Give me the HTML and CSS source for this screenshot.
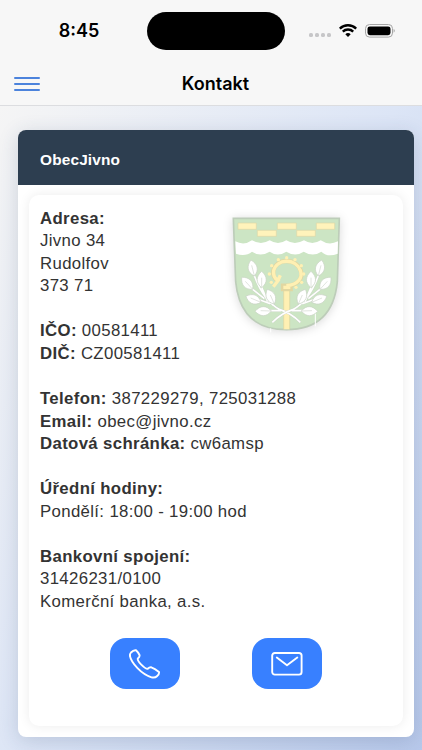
FILE: index.html
```html
<!DOCTYPE html>
<html lang="cs">
<head>
    <meta charset="utf-8">
    <meta name="viewport" content="width=device-width, initial-scale=1">
    <title>Kontakt</title>
    <link rel="stylesheet" href="styles.css">
</head>
<body>
    <header>
        <div class="status">
            <span class="time">8:45</span>
            <span class="island"></span>
            <div class="status-icons">
                <svg class="dots" width="22" height="4" viewBox="0 0 22 4" fill="#c6c6c8">
                    <rect width="4" height="4" rx="1.6"/><rect x="6" width="4" height="4" rx="1.6"/><rect x="12" width="4" height="4" rx="1.6"/><rect x="18" width="4" height="4" rx="1.6"/>
                </svg>
                <svg class="wifi" width="18" height="13" viewBox="0 0 18 13" fill="none" stroke="#000" stroke-width="2.4">
                    <path d="M.8 4.6a11.7 11.7 0 0 1 16.4 0M3.8 7.7a7.4 7.4 0 0 1 10.4 0"/>
                    <path d="M6.3 10.2a4 4 0 0 1 5.4 0L9 12.9z" fill="#000" stroke="none"/>
                </svg>
                <svg width="30" height="14" viewBox="0 0 30 14">
                    <rect x=".5" y=".5" width="27" height="12.6" rx="4" fill="none" stroke="#a6a6a6"/>
                    <rect x="2.5" y="2.4" width="23" height="8.8" rx="2.4"/>
                    <path d="M28.7 4.8q2 2 0 4z" fill="#999"/>
                </svg>
            </div>
        </div>
        <nav>
            <button class="menu" type="button" aria-label="Menu"><span></span><span></span><span></span></button>
            <h1>Kontakt</h1>
        </nav>
    </header>
    <main>
        <div class="card">
            <h2>ObecJivno</h2>
            <div class="content">
                <svg class="crest" width="135" height="135" viewBox="0 0 405 405">
                    <path d="M40 40H358L352 230Q338 374 199 374Q61 374 47 230Z" fill="#cce5c4" stroke="#bdcdb9" stroke-width="5"/>
                    <path d="M46 109q26 14 50-3q27 16 53 0q25 16 50 0q25 16 53 0q25 16 50 0q25 17 52 3l-1 37q-30 12-49-6q-25 17-53 0q-25 17-52 0q-26 17-50 0q-28 17-53 0q-20 16-48 6z" fill="#fff"/>
                    <path d="M54 54h55v19H54zM112 76h57v18h-57zM172 54h57v19h-57zM230 76h56v18h-56zM289 54h55v19h-55z" fill="#fff3bb" stroke="#dcd8a8" stroke-width="2"/>
                    <path d="M191 373V252h18V373" fill="#fff0b3" stroke="#ded69f" stroke-width="2"/>
                    <path d="M189 242h23v10h-23zM199 243C236 241 250 218 242 196C226 157 169 160 160 197Q157 216 173 228" fill="none" stroke="#e1d7a1" stroke-width="13"/>
                    <path d="M190 247h21M199 242C234 240 249 218 241 196C226 158 170 161 161 197Q158 215 174 227l-14 18M173 228l8-17" fill="none" stroke="#fff0b3" stroke-width="10"/>
                    <g fill="#fff0b3">
                        <circle cx="200" cy="158" r="5"/><circle cx="175" cy="164" r="5"/><circle cx="225" cy="164" r="5"/><circle cx="155" cy="182" r="5"/><circle cx="244" cy="182" r="5"/><circle cx="148" cy="207" r="5"/><circle cx="251" cy="207" r="5"/><circle cx="154" cy="232" r="5"/><circle cx="245" cy="232" r="5"/><circle cx="228" cy="247" r="5"/>
                    </g>
                    <defs>
                        <path id="leaf" d="M0 0C-19-15-17-34 0-49C17-34 19-15 0 0Z"/>
                        <g id="branch">
                            <path d="M241 352Q211 323 180 314Q131 288 103 212M143 290L125 247M160 302L153 282M133 281L88 245M151 296L110 281M183 317L145 317" fill="none" stroke="#c8d0c5" stroke-width="7"/>
                            <path d="M241 352Q211 323 180 314Q131 288 103 212M143 290L125 247M160 302L153 282M133 281L88 245M151 296L110 281M183 317L145 317" fill="none" stroke="#fff" stroke-width="5"/>
                            <g fill="#fff" stroke="#c8d3c4" stroke-width="2">
                                <use href="#leaf" transform="translate(103 213) rotate(-12)"/>
                                <use href="#leaf" transform="translate(125 248)"/>
                                <use href="#leaf" transform="translate(98 253) rotate(-42)"/>
                                <use href="#leaf" transform="translate(163 297) rotate(-26)"/>
                                <use href="#leaf" transform="translate(123 292) rotate(-68)"/>
                                <use href="#leaf" transform="translate(154 318) rotate(-91)"/>
                            </g>
                            <path d="M103 212L95 181M125 247V218M98 253L76 229M163 297L151 270M123 292L92 279M154 318L122 317" fill="none" stroke="#d0d6cd" stroke-width="2"/>
                        </g>
                    </defs>
                    <use href="#branch"/>
                    <use href="#branch" transform="translate(398 0) scale(-1 1)"/>
                    <path d="M286 326v38M152 370v12" stroke="#fff" stroke-width="3"/>
                </svg>
                <p>
                    <b>Adresa:</b><br>
                    Jivno 34<br>
                    Rudolfov<br>
                    373 71<br>
                    <br>
                    <b>IČO:</b> 00581411<br>
                    <b>DIČ:</b> CZ00581411<br>
                    <br>
                    <b>Telefon:</b> 387229279, 725031288<br>
                    <b>Email:</b> obec@jivno.cz<br>
                    <b>Datová schránka:</b> cw6amsp<br>
                    <br>
                    <b>Úřední hodiny:</b><br>
                    Pondělí: 18:00 - 19:00 hod<br>
                    <br>
                    <b>Bankovní spojení:</b><br>
                    31426231/0100<br>
                    Komerční banka, a.s.
                </p>
                <div class="buttons">
                    <a href="tel:387229279" aria-label="Telefon">
                        <svg width="32" height="30" viewBox="0 0 32 30">
                            <path d="M2 3.5Q4.5 .8 7 1.3Q9.2 3.3 10.5 6Q11 7.8 8.8 9.6Q8.2 11.5 12 15.3Q16.6 20 18.7 19.8Q20.5 18 22.3 18.3Q25.7 19.4 30 23Q30.4 25.2 28.2 27Q26 29.2 22.5 28.3Q15 26 8.5 19.2Q2 12.5 .9 7Q.7 5 2 3.5Z"/>
                        </svg>
                    </a>
                    <a href="mailto:obec@jivno.cz" aria-label="Email">
                        <svg width="32" height="24" viewBox="0 0 32 24">
                            <rect x="1.2" y="1" width="29.4" height="21.6" rx="2.6"/>
                            <path d="M5.8 5.5L16 13.2L26.3 5.5"/>
                        </svg>
                    </a>
                </div>
            </div>
        </div>
    </main>
</body>
</html>
```
FILE: styles.css
```css
* {
    box-sizing: border-box;
}
body {
    margin: 0;
    height: 750px;
    overflow: hidden;
    font-family: "Liberation Sans", Arial, sans-serif;
    color: #333;
}
header {
    height: 106px;
    background: #f7f7f7;
    border-bottom: 1px solid #dcdde0;
    color: #000;
    font-family: Inter, sans-serif;
}
.status {
    height: 61px;
    display: grid;
    grid-template-columns: 147px 138px 1fr;
    align-items: center;
}
.time {
    padding-left: 11px;
    text-align: center;
    font-size: 18px;
    font-weight: 600;
}
.island {
    height: 38px;
    border-radius: 19px;
    background: #000;
}
.status-icons {
    display: flex;
    align-items: center;
    padding-left: 24px;
}
.dots {
    margin-top: 8px;
}
.wifi {
    margin: 0 8px 0 8px;
}
nav {
    height: 44px;
    display: grid;
    grid-template-columns: 54px 1fr 54px;
    align-items: center;
}
.menu {
    display: flex;
    flex-direction: column;
    gap: 4px;
    padding: 1px 0 0 14px;
    border: 0;
    background: none;
}
.menu span {
    width: 26px;
    height: 2px;
    border-radius: 1px;
    background: #4c83dc;
}
h1 {
    margin: 0;
    padding-left: 9px;
    text-align: center;
    font-size: 18px;
    font-weight: 600;
}
main {
    height: 644px;
    padding: 24px 8px 0 18px;
    background: linear-gradient(120deg, #f5f5f5 0%, #dce5f6 50%, #b8c9eb 100%);
}
.card {
    height: 607px;
    border-radius: 8px;
    overflow: hidden;
    background: #fff;
    box-shadow: 0 4px 20px rgba(40, 60, 100, .18);
}
h2 {
    margin: 0;
    height: 55px;
    padding: 2px 22px 0;
    line-height: 56px;
    background: #2d3e50;
    color: #fff;
    font-size: 15.4px;
    letter-spacing: .16px;
}
.content {
    height: 531px;
    margin: 10px 11px;
    padding: 11px;
    border-radius: 10px;
    background: #fff;
    box-shadow: 0 0 12px rgba(0, 0, 0, .08);
}
.crest {
    float: right;
    margin: -1px 37px 0 0;
    filter: drop-shadow(0 1px 5px rgba(0, 0, 0, .15));
}
p {
    margin: 0;
    padding-top: 1.6px;
    font-size: 16.8px;
    line-height: 22.54px;
    letter-spacing: .35px;
}
.buttons {
    display: flex;
    gap: 72px;
    padding: 24.7px 0 0 70px;
}
.buttons a {
    display: flex;
    align-items: center;
    justify-content: center;
    width: 70px;
    height: 51px;
    border-radius: 16px;
    background: #3880ff;
}
.buttons svg {
    fill: none;
    stroke: #fff;
    stroke-width: 1.9;
    stroke-linecap: round;
    stroke-linejoin: round;
}
```
